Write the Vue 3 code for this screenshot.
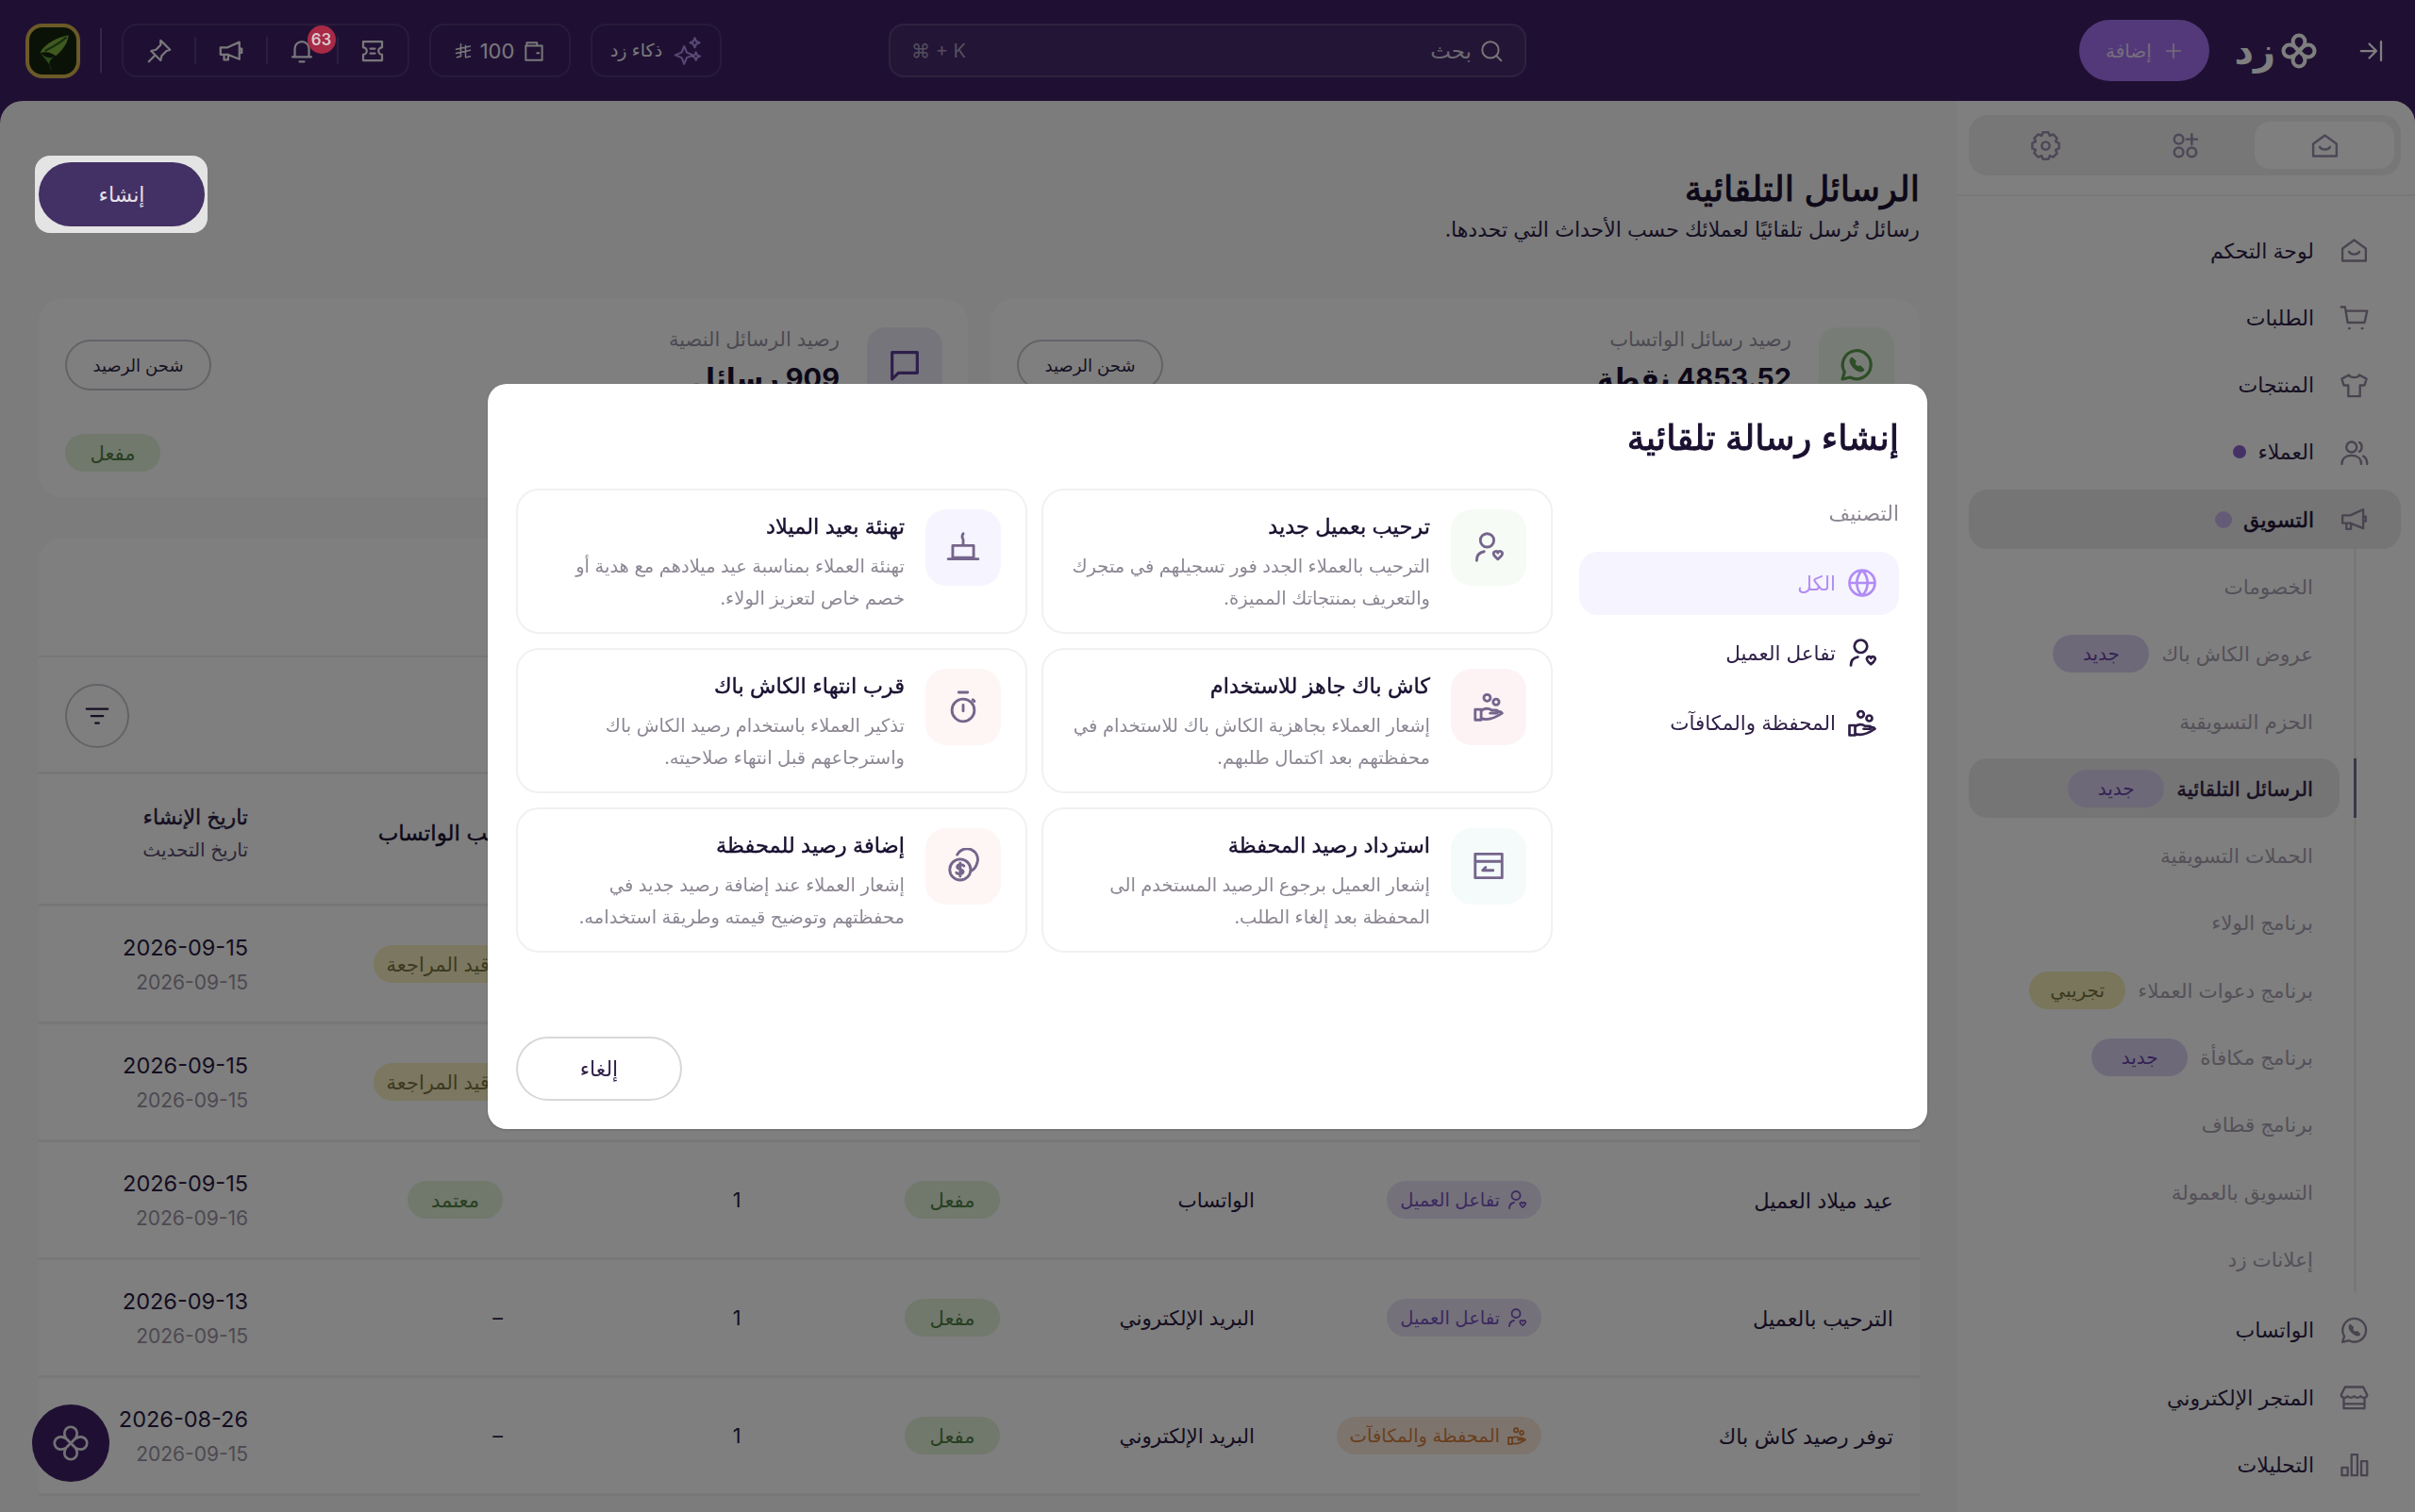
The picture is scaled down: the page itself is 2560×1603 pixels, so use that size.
<template>
  <div class="app" dir="rtl">
    <header class="topbar">
      <div class="top-right">
        <svg class="ic collapse" viewBox="0 0 24 24"><path :d="icons.collapse" /></svg>
        <div class="brand">
          <svg class="ic flower" viewBox="0 0 24 24"><path :d="icons.flower" /></svg>
          <span>زد</span>
        </div>
        <button class="add-btn">
          <svg class="ic" viewBox="0 0 24 24"><path :d="icons.plus" /></svg>
          <span>إضافة</span>
        </button>
      </div>

      <div class="search">
        <svg class="ic" viewBox="0 0 24 24"><path :d="icons.search" /></svg>
        <span>بحث</span>
        <span class="kbd" dir="ltr">⌘ + K</span>
      </div>

      <div class="top-left">
        <div class="top-box ai-box">
          <svg class="ic spark" viewBox="0 0 24 24"><path :d="icons.sparkle" /></svg>
          <span>ذكاء زد</span>
        </div>
        <div class="top-box wallet-box">
          <svg class="ic" viewBox="0 0 24 24"><path :d="icons.wallet" /></svg>
          <span class="num">100</span>
          <svg class="ic riyal" viewBox="0 0 24 24"><path :d="icons.riyal" /></svg>
        </div>
        <div class="top-box icon-box">
          <span v-for="name in ['ticket', 'bell', 'mega', 'pin']" :key="name" class="icon-cell">
            <svg class="ic" viewBox="0 0 24 24"><path :d="icons[name]" /></svg>
            <span v-if="name === 'bell'" class="notif">63</span>
          </span>
        </div>
        <span class="top-sep"></span>
        <div class="logo">
          <svg viewBox="0 0 40 44">
            <path d="M36 6C26 8 12 14 7 24c7-2 12 0 16 3 6-5 12-12 13-21Z" fill="#7fb23f" />
            <path d="M7 24c7 6 11 6 16 3-6 3-9 8-4 15-2-7-7-12-12-18Z" fill="#5c9a32" />
            <path d="M12 22c8-4 15-8 22-14" stroke="#2e5a1c" stroke-width="2" fill="none" />
          </svg>
        </div>
      </div>
    </header>

    <div class="shell">
      <aside class="sidebar">
        <div class="tabs-wrap">
          <div class="tabs">
            <span class="tab active"><svg class="ic" viewBox="0 0 24 24"><path :d="icons.home" /></svg></span>
            <span class="tab"><svg class="ic" viewBox="0 0 24 24"><path :d="icons.apps" /></svg></span>
            <span class="tab"><svg class="ic" viewBox="0 0 24 24"><path :d="icons.gear" /></svg></span>
          </div>
        </div>
        <nav class="nav">
          <a v-for="item in navTop" :key="item.label" class="nav-item" :class="{ active: item.active }">
            <svg class="ic" viewBox="0 0 24 24"><path :d="icons[item.icon]" /></svg>
            <span>{{ item.label }}</span>
            <i v-if="item.dot" class="dot" :class="{ light: item.active }"></i>
          </a>
          <div class="sub-list">
            <a v-for="sub in navSub" :key="sub.label" class="sub-item" :class="{ active: sub.active }">
              <span>{{ sub.label }}</span>
              <em v-if="sub.tag" class="tag" :class="sub.tagType">{{ sub.tag }}</em>
            </a>
          </div>
          <a v-for="item in navBottom" :key="item.label" class="nav-item">
            <svg class="ic" viewBox="0 0 24 24"><path :d="icons[item.icon]" /></svg>
            <span>{{ item.label }}</span>
          </a>
        </nav>
      </aside>

      <main class="page">
        <div class="page-head">
          <div>
            <h1>الرسائل التلقائية</h1>
            <p>رسائل تُرسل تلقائيًا لعملائك حسب الأحداث التي تحددها.</p>
          </div>
          <div class="spot">
            <button class="create-btn">إنشاء</button>
          </div>
        </div>

        <div class="stats">
          <section v-for="stat in stats" :key="stat.label" class="stat">
            <div class="stat-top">
              <span class="stat-icon" :class="stat.tone">
                <svg class="ic" viewBox="0 0 24 24"><path :d="icons[stat.icon]" /></svg>
              </span>
              <div class="stat-text">
                <span>{{ stat.label }}</span>
                <b>{{ stat.value }}</b>
              </div>
              <button class="charge">شحن الرصيد</button>
            </div>
            <span class="pill green stat-pill">مفعل</span>
          </section>
        </div>

        <section class="table-card">
          <div class="table-tabs"></div>
          <div class="table-tools">
            <button class="filter"><svg class="ic" viewBox="0 0 24 24"><path :d="icons.filter" /></svg></button>
          </div>
          <div class="row head">
            <span>اسم الرسالة</span>
            <span>التصنيف</span>
            <span>القناة</span>
            <span>الحالة</span>
            <span class="count">الإرسال</span>
            <span class="wa-head">قالب الواتساب</span>
            <span class="dates"><b>تاريخ الإنشاء</b><small>تاريخ التحديث</small></span>
          </div>
          <div v-for="row in rows" :key="row.name" class="row">
            <span class="name">{{ row.name }}</span>
            <span>
              <em class="pill cat" :class="row.catTone">
                <svg class="ic" viewBox="0 0 24 24"><path :d="icons[row.catIcon]" /></svg>
                {{ row.cat }}
              </em>
            </span>
            <span class="channel">{{ row.channel }}</span>
            <span><em class="pill green">مفعل</em></span>
            <span class="count">1</span>
            <span class="wa">
              <em v-if="row.wa" class="pill" :class="row.waTone">{{ row.wa }}</em>
              <template v-else>–</template>
            </span>
            <span class="dates"><b>{{ row.created }}</b><small>{{ row.updated }}</small></span>
          </div>
        </section>

        <button class="fab"><svg class="ic" viewBox="0 0 24 24"><path :d="icons.flower" /></svg></button>
      </main>
    </div>

    <div class="overlay">
      <div class="modal">
        <h2>إنشاء رسالة تلقائية</h2>
        <div class="modal-body">
          <div class="cats">
            <div class="cats-label">التصنيف</div>
            <div v-for="cat in categories" :key="cat.label" class="cat-item" :class="{ active: cat.active }">
              <svg class="ic" viewBox="0 0 24 24"><path :d="icons[cat.icon]" /></svg>
              <span>{{ cat.label }}</span>
            </div>
          </div>
          <div class="templates">
            <article v-for="card in cards" :key="card.title" class="tpl">
              <span class="tpl-icon" :class="card.tone">
                <svg class="ic" viewBox="0 0 24 24"><path :d="icons[card.icon]" /></svg>
              </span>
              <div>
                <h3>{{ card.title }}</h3>
                <p>{{ card.desc }}</p>
              </div>
            </article>
          </div>
        </div>
        <div class="modal-foot">
          <button class="cancel">إلغاء</button>
        </div>
      </div>
    </div>
  </div>
</template>

<script setup>
// cog outline, 8 teeth
const gear = () => {
  const pts = [];
  for (let i = 0; i < 8; i++) {
    const a = (i * Math.PI) / 4;
    [[-0.2, 10.5], [0.2, 10.5], [0.39, 8.3]].forEach(([o, r]) => {
      pts.push((12 + r * Math.cos(a + o)).toFixed(1) + ' ' + (12 + r * Math.sin(a + o)).toFixed(1));
    });
  }
  return 'M' + pts.join('L') + 'ZM12 9a3 3 0 1 0 0 6 3 3 0 0 0 0-6Z';
};

const icons = {
  home: 'M3 10.5 12 4l9 6.5V20H3ZM8 13c1.5 2.6 6.5 2.6 8 0',
  cart: 'M2 4h3l2 12h13l2-9H5.6M8 20.5h.5M18 20.5h.5',
  shirt: 'M8 4 2.5 7 4 12h3.5v8.5h9V12H20l1.5-5L16 4c-1 2.5-7 2.5-8 0Z',
  users: 'M10 4a4 4 0 1 0 0 8 4 4 0 0 0 0-8ZM2.5 21c0-4.5 3.5-6.5 7.5-6.5s7.5 2 7.5 6.5M16 4.5c2.5 1 2.5 6 0 7M19 15c2 1 3 3 3 6',
  mega: 'M3 9h6l10-4.5V19L9 15H3ZM6 15v4.5h3.5V15M19 10h2v3.5h-2',
  whatsapp: 'M3 21l1.4-4.6A9 9 0 1 1 8 19.8ZM9 8c-1 1-.5 3.2 1.6 5.3S15 16 16 15l-1.8-1.8-1.4.6c-1-.5-2.1-1.6-2.6-2.6l.6-1.4Z',
  store: 'M5 4h14l3 6c0 2.5-3.5 3-5 1-1.2 1.6-3.8 1.6-5 0-1.2 1.6-3.8 1.6-5 0-1.5 2-5 1.5-5-1ZM4 13v7.5h16V13M4 17h16',
  chart: 'M2.5 14.5H7v6H2.5ZM10 4.5h4.5v16H10ZM17.5 9.5H22v11h-4.5Z',
  gear: gear(),
  apps: 'M7 3.5a3.5 3.5 0 1 0 0 7 3.5 3.5 0 0 0 0-7ZM7 13.5a3.5 3.5 0 1 0 0 7 3.5 3.5 0 0 0 0-7ZM17 13.5a3.5 3.5 0 1 0 0 7 3.5 3.5 0 0 0 0-7ZM17 3v8M13 7h8',
  pin: 'M13 3l8 8-3 1-4 4-1 4-8-8 4-1 4-4ZM8 16l-5 5',
  bell: 'M6 17v-7a6 6 0 0 1 12 0v7M4 17h16M10 21h4',
  ticket: 'M4 4h16v5a3 3 0 0 0 0 6v5H4v-5a3 3 0 0 0 0-6ZM10 10h4M10 14h4',
  wallet: 'M5 7V4h10v3M4 7h16v14H4ZM15 14h2',
  riyal: 'M9 3v16l-5 1M15 5v15M3 10l18-4M3 15l18-4M16 20l5-1',
  sparkle: 'M9 8l2.2 5.3 5.300 2.200-5.300 2.200L9 23l-2.200-5.300-5.300-2.200 5.300-2.200ZM18 1l1.200 2.800L22 5l-2.800 1.200L18 9l-1.200-2.800L14 5l2.800-1.200ZM19 13l1 2.500 2.500 1-2.500 1-1 2.500-1-2.500-2.500-1 2.500-1Z',
  search: 'M11 3a8 8 0 1 0 0 16 8 8 0 0 0 0-16ZM17 17l4.500 4.500',
  plus: 'M12 4v16M4 12h16',
  collapse: 'M20 4v16M3 12h13M10 6l6 6-6 6',
  flower: 'M12 12c-2.500-2-3.500-3.500-3.500-5.500a3.500 3.500 0 0 1 7 0c0 2-1 3.500-3.500 5.500Zc2-2.500 3.500-3.500 5.500-3.500a3.500 3.500 0 0 1 0 7c-2 0-3.500-1-5.500-3.500Zc2.500 2 3.500 3.500 3.500 5.500a3.500 3.500 0 0 1-7 0c0-2 1-3.500 3.500-5.500Zc-2 2.500-3.500 3.500-5.500 3.500a3.500 3.500 0 0 1 0-7c2 0 3.500 1 5.500 3.500Z',
  filter: 'M3 6h18M7 12h10M10.500 18h3',
  chat: 'M4 4h16v13H8l-4 4Z',
  globe: 'M12 3a9 9 0 1 0 0 18 9 9 0 0 0 0-18ZM3 12h18M12 3c-5 5-5 13 0 18M12 3c5 5 5 13 0 18',
  userheart: 'M11 3a4.500 4.500 0 1 0 0 9 4.500 4.500 0 0 0 0-9ZM4 21c0-3.500 2-5.500 5-6M15.500 15.500c1-1 2.500-1 2.700.4.2-1.400 2-1.400 2.800-.4.8 1.200 0 2.400-2.800 4.600-2.800-2.200-3.500-3.400-2.700-4.600Z',
  handcoins: 'M3 14h4v7H3ZM7 15c2-2 5-2 7-.5h3c1.500 0 1.500 2 0 2h-4M7 20c4 1.500 8 .5 14-3.500-1-1.500-3-1-4.500 0M11 4a2.200 2.200 0 1 0 0 4.400A2.200 2.200 0 0 0 11 4ZM17 7a2 2 0 1 0 0 4 2 2 0 0 0 0-4Z',
  cake: 'M12 3c-.6 1-.9 2-.4 3M12 7v4M5 11h14v8H5ZM2 20h20',
  timer: 'M12 7a7.500 7.500 0 1 0 0 15 7.500 7.500 0 0 0 0-15ZM9 2.500h6M12 11v4M18.500 7.500l1 1',
  refund: 'M3 4h18v16H3ZM3 9h18M8 15h7M8 15l2-2',
  coins: 'M10 7.500a7 7 0 1 0 0 14 7 7 0 0 0 0-14ZM12.500 12c-.5-1-4-1.500-4.500.5s4.500 1.500 4 3.500-4 1.500-4.500.5M10 10v9M8 4.500a7 7 0 0 1 13 6.500 7 7 0 0 1-3 4',
};

const navTop = [
  { label: 'لوحة التحكم', icon: 'home' },
  { label: 'الطلبات', icon: 'cart' },
  { label: 'المنتجات', icon: 'shirt' },
  { label: 'العملاء', icon: 'users', dot: true },
  { label: 'التسويق', icon: 'mega', dot: true, active: true },
];
const navSub = [
  { label: 'الخصومات' },
  { label: 'عروض الكاش باك', tag: 'جديد', tagType: 'new' },
  { label: 'الحزم التسويقية' },
  { label: 'الرسائل التلقائية', tag: 'جديد', tagType: 'new', active: true },
  { label: 'الحملات التسويقية' },
  { label: 'برنامج الولاء' },
  { label: 'برنامج دعوات العملاء', tag: 'تجريبي', tagType: 'beta' },
  { label: 'برنامج مكافأة', tag: 'جديد', tagType: 'new' },
  { label: 'برنامج قطاف' },
  { label: 'التسويق بالعمولة' },
  { label: 'إعلانات زد' },
];
const navBottom = [
  { label: 'الواتساب', icon: 'whatsapp' },
  { label: 'المتجر الإلكتروني', icon: 'store' },
  { label: 'التحليلات', icon: 'chart' },
];

const stats = [
  { label: 'رصيد رسائل الواتساب', value: '4853.52 نقطة', icon: 'whatsapp', tone: 'wa-tone' },
  { label: 'رصيد الرسائل النصية', value: '909 رسائل', icon: 'chat', tone: 'sms-tone' },
];

const rows = [
  { name: 'قرب انتهاء الكاش باك', cat: 'المحفظة والمكافآت', catIcon: 'handcoins', catTone: 'orange', channel: 'الواتساب', wa: 'قيد المراجعة', waTone: 'yellow', created: '2026-09-15', updated: '2026-09-15' },
  { name: 'إضافة رصيد للمحفظة', cat: 'المحفظة والمكافآت', catIcon: 'handcoins', catTone: 'orange', channel: 'الواتساب', wa: 'قيد المراجعة', waTone: 'yellow', created: '2026-09-15', updated: '2026-09-15' },
  { name: 'عيد ميلاد العميل', cat: 'تفاعل العميل', catIcon: 'userheart', catTone: 'purple', channel: 'الواتساب', wa: 'معتمد', waTone: 'green', created: '2026-09-15', updated: '2026-09-16' },
  { name: 'الترحيب بالعميل', cat: 'تفاعل العميل', catIcon: 'userheart', catTone: 'purple', channel: 'البريد الإلكتروني', created: '2026-09-13', updated: '2026-09-15' },
  { name: 'توفر رصيد كاش باك', cat: 'المحفظة والمكافآت', catIcon: 'handcoins', catTone: 'orange', channel: 'البريد الإلكتروني', created: '2026-08-26', updated: '2026-09-15' },
];

const categories = [
  { label: 'الكل', icon: 'globe', active: true },
  { label: 'تفاعل العميل', icon: 'userheart' },
  { label: 'المحفظة والمكافآت', icon: 'handcoins' },
];

const cards = [
  { title: 'ترحيب بعميل جديد', desc: 'الترحيب بالعملاء الجدد فور تسجيلهم في متجرك والتعريف بمنتجاتك المميزة.', icon: 'userheart', tone: 'g' },
  { title: 'تهنئة بعيد الميلاد', desc: 'تهنئة العملاء بمناسبة عيد ميلادهم مع هدية أو خصم خاص لتعزيز الولاء.', icon: 'cake', tone: 'v' },
  { title: 'كاش باك جاهز للاستخدام', desc: 'إشعار العملاء بجاهزية الكاش باك للاستخدام في محفظتهم بعد اكتمال طلبهم.', icon: 'handcoins', tone: 'r' },
  { title: 'قرب انتهاء الكاش باك', desc: 'تذكير العملاء باستخدام رصيد الكاش باك واسترجاعهم قبل انتهاء صلاحيته.', icon: 'timer', tone: 'o' },
  { title: 'استرداد رصيد المحفظة', desc: 'إشعار العميل برجوع الرصيد المستخدم الى المحفظة بعد إلغاء الطلب.', icon: 'refund', tone: 'm' },
  { title: 'إضافة رصيد للمحفظة', desc: 'إشعار العملاء عند إضافة رصيد جديد في محفظتهم وتوضيح قيمته وطريقة استخدامه.', icon: 'coins', tone: 'o' },
];
</script>

<style>
html, body { margin: 0; overflow: hidden; }
</style>

<style scoped>
* { box-sizing: border-box; }
.app {
  width: 2560px;
  height: 1603px;
  overflow: hidden;
  background: #3e2066;
  color: #2f1f47;
  font-family: Inter, "DejaVu Sans", sans-serif;
  font-size: 21px;
  display: flex;
  flex-direction: column;
}
button { font: inherit; color: inherit; background: none; border: 0; padding: 0; }
h1, h2, h3, p { margin: 0; font: inherit; }
em { font-style: normal; }
.ic { width: 30px; height: 30px; flex: none; fill: none; stroke: currentColor; stroke-width: 1.8; stroke-linecap: round; stroke-linejoin: round; }

/* top bar */
.topbar {
  height: 107px;
  flex: none;
  display: grid;
  grid-template-columns: 1fr 676px 1fr;
  align-items: center;
  color: #fff;
}
.top-right { display: flex; align-items: center; padding-right: 31px; }
.collapse { width: 30px; height: 30px; margin-left: 40px; color: #fff; }
.brand { display: flex; align-items: center; gap: 3px; margin-left: 26px; font-size: 40px; font-weight: 700; }
.flower { width: 44px; height: 44px; stroke-width: 2.2; }
.add-btn {
  width: 138px;
  height: 65px;
  border-radius: 33px;
  background: #a672f4;
  color: #e8dcf8;
  display: flex;
  align-items: center;
  justify-content: center;
  gap: 12px;
  font-size: 20px;
}
.add-btn .ic { width: 22px; height: 22px; }
.search {
  height: 57px;
  border: 2px solid rgba(255, 255, 255, .12);
  border-radius: 16px;
  background: rgba(255, 255, 255, .05);
  display: flex;
  align-items: center;
  gap: 8px;
  padding: 0 22px 0 22px;
  color: #d8d0e2;
  font-size: 23px;
}
.search .ic { width: 26px; height: 26px; color: #f0ecf4; }
.kbd { margin-right: auto; color: #a89cbc; font-size: 20px; }
.top-left { display: flex; align-items: center; justify-content: flex-end; gap: 21px; padding-left: 27px; color: #f2f0f6; }
.top-box {
  height: 57px;
  border: 2px solid rgba(255, 255, 255, .1);
  border-radius: 16px;
  display: flex;
  align-items: center;
}
.ai-box { width: 139px; gap: 12px; justify-content: center; font-size: 19px; }
.spark { color: #b291ec; stroke-width: 1.6; }
.wallet-box { width: 150px; justify-content: center; gap: 8px; font-size: 22px; }
.wallet-box .ic { width: 26px; height: 26px; }
.riyal { width: 20px !important; }
.icon-box { width: 305px; }
.icon-cell {
  position: relative;
  width: 76px;
  height: 29px;
  display: flex;
  align-items: center;
  justify-content: center;
  border-left: 2px solid rgba(255, 255, 255, .14);
}
.icon-cell:last-child { border-left: 0; }
.notif {
  position: absolute;
  z-index: 25;
  top: -12px;
  left: 42px;
  width: 30px;
  height: 30px;
  border-radius: 50%;
  background: #a82a45;
  color: #d8c8cc;
  font-size: 17px;
  font-weight: 600;
  display: flex;
  align-items: center;
  justify-content: center;
}
.top-sep { width: 2px; height: 47px; background: rgba(255, 255, 255, .22); }
.logo {
  width: 58px;
  height: 58px;
  border: 4px solid #d6b44e;
  border-radius: 18px;
  background: #14240e;
  display: flex;
  align-items: center;
  justify-content: center;
}
.logo svg { width: 44px; height: 46px; }

/* shell */
.shell {
  flex: 1;
  min-height: 0;
  display: flex;
  background: #f8f8f8;
  border-radius: 24px 24px 0 0;
  overflow: hidden;
}
.sidebar { width: 485px; flex: none; background: #fff; }
.tabs-wrap { height: 101px; padding: 15px 15px 0 12px; border-bottom: 2px solid #f0f0f0; }
.tabs {
  height: 64px;
  background: #eeeeee;
  border-radius: 20px;
  display: grid;
  grid-template-columns: repeat(3, 1fr);
  padding: 7px;
  color: #9a8fae;
}
.tabs .ic { width: 33px; height: 33px; }
.tab { display: flex; align-items: center; justify-content: center; border-radius: 16px; }
.tab.active { background: #fff; }
.nav { padding: 26px 15px 0 12px; display: flex; flex-direction: column; gap: 8.3px; }
.nav-item {
  height: 63px;
  display: flex;
  align-items: center;
  padding-right: 33px;
  gap: 26px;
  border-radius: 20px;
  color: #2f1f47;
  font-size: 22px;
}
.nav-item .ic { width: 33px; height: 33px; stroke-width: 1.7; color: #93889f; }
.nav-item.active { background: #eaeaea; color: #1f1033; -webkit-text-stroke: .5px currentColor; }
.dot { width: 14px; height: 14px; border-radius: 50%; background: #8a62d0; margin-right: -14px; }
.dot.light { width: 18px; height: 18px; background: #cdb6ef; }
.sub-list {
  margin-right: 47px;
  padding: 8px 15px 4px 0;
  margin-top: -8px;
  border-right: 3px solid #eeeeee;
  display: flex;
  flex-direction: column;
  gap: 8.3px;
}
.sub-item {
  position: relative;
  height: 63px;
  display: flex;
  align-items: center;
  gap: 13px;
  padding-right: 28px;
  border-radius: 20px;
  color: #aaa3b2;
  font-size: 21.5px;
}
.sub-item.active { background: #eaeaea; color: #2f1f47; }
.sub-item.active > span { -webkit-text-stroke: .5px currentColor; }
.sub-item.active::after {
  content: '';
  position: absolute;
  top: 0;
  bottom: 0;
  right: -18px;
  width: 3px;
  background: #7a6a96;
}
.tag { width: 102px; height: 40px; border-radius: 20px; display: flex; align-items: center; justify-content: center; font-size: 20px; font-weight: 400; }
.tag.new { background: #dcd3f2; color: #6a45a8; }
.tag.beta { background: #f3ecb8; color: #7a7440; }

/* page */
.page { flex: 1; min-width: 0; padding: 58px 40px 0 41px; position: relative; }
.page-head { height: 152px; display: flex; justify-content: space-between; align-items: flex-start; }
h1 { font-size: 37px; font-weight: 400; -webkit-text-stroke: 1px currentColor; color: #1a1030; line-height: 52px; margin-top: 9px; }
.page-head p { font-size: 22px; line-height: 34px; color: #2f1f47; }
.spot {
  position: relative;
  z-index: 30;
  margin-left: -4px;
  background: #e4e4e4;
  border-radius: 16px;
  padding: 7px 3px 7px 4px;
}
.create-btn { display: block; width: 176px; height: 68px; border-radius: 34px; background: #433064; color: #e4e0ea; font-size: 22px; }

.stats { display: grid; grid-template-columns: 1fr 1fr; gap: 24px; }
.stat { height: 210px; background: #fff; border-radius: 24px; padding: 30px 27px 27px 28px; display: flex; flex-direction: column; }
.stat-top { display: flex; gap: 29px; align-items: flex-start; }
.stat-icon { width: 80px; height: 80px; border-radius: 20px; display: flex; align-items: center; justify-content: center; }
.stat-icon .ic { width: 40px; height: 40px; stroke-width: 1.9; }
.wa-tone { background: #f0f8ef; color: #5a9c4c; }
.sms-tone { background: #eeeaf8; color: #5a3d96; }
.stat-text { display: flex; flex-direction: column; gap: 11px; color: #9a93a4; font-size: 21px; }
.stat-text b { font-size: 29px; color: #1a1030; }
.charge { margin-right: auto; margin-top: 13px; width: 155px; height: 54px; border: 2px solid #c9c5ce; border-radius: 27px; font-size: 18px; color: #2f1f47; }
.pill { height: 40px; min-width: 101px; padding: 0 14px; border-radius: 20px; display: inline-flex; align-items: center; justify-content: center; gap: 6px; font-size: 21px; }
.pill.cat { font-size: 19.5px; }
.pill .ic { width: 24px; height: 24px; }
.stat-pill { align-self: flex-end; margin-top: auto; }
.green { background: #e3f1d8; color: #4d8044; }
.yellow { background: #f6efc0; color: #7a7440; }
.purple { background: #e8e2f6; color: #7a54c0; }
.orange { background: #fbe9dc; color: #d4803c; }

.table-card { margin-top: 44px; background: #fff; border-radius: 24px 24px 0 0; }
.table-tabs { height: 126px; border-bottom: 2px solid #eee; }
.table-tools { height: 124px; padding: 28px 28px 0; border-bottom: 3px solid #eee; display: flex; justify-content: flex-end; }
.filter { width: 68px; height: 68px; border: 2px solid #c9c5ce; border-radius: 50%; display: flex; align-items: center; justify-content: center; }
.row {
  height: 125px;
  display: grid;
  grid-template-columns: 373px 304px 270px 180px 198px 419px 1fr;
  align-items: center;
  padding-right: 28px;
  border-bottom: 3px solid #eee;
  font-size: 21.5px;
}
.row.head { height: 140px; padding-bottom: 13px; color: #1a1030; }
.row.head > span { -webkit-text-stroke: .4px currentColor; }
.head .wa-head { white-space: nowrap; margin-right: 140px; font-size: 23px; }
.name { color: #2a1a42; font-size: 22.5px; }
.channel { color: #2a1a42; }
.count { text-align: center; color: #2a1a42; }
.wa { padding-right: 149px; white-space: nowrap; }
.dates { display: flex; flex-direction: column; gap: 10px; white-space: nowrap; }
.dates b { font-weight: 400; font-size: 23.5px; color: #2a1a42; }
.head .dates b { font-size: 22px; }
.dates small { font-size: 21px; color: #9a93a4; }
.head .dates small { color: #5a4d6e; font-size: 20px; -webkit-text-stroke: 0; }
.fab {
  position: absolute;
  left: 34px;
  top: 1382px;
  width: 82px;
  height: 82px;
  border-radius: 50%;
  background: #3e2066;
  color: #e8e4ee;
  display: flex;
  align-items: center;
  justify-content: center;
}
.fab .ic { width: 46px; height: 46px; stroke-width: 1.4; }

/* modal */
.overlay {
  position: fixed;
  inset: 0;
  z-index: 20;
  background: rgba(0, 0, 0, .5);
  display: flex;
  align-items: center;
  justify-content: center;
}
.modal {
  width: 1526px;
  height: 790px;
  background: #fff;
  border-radius: 20px;
  padding: 30px;
  box-shadow: 0 1px 3px rgba(0, 0, 0, .2);
  display: flex;
  flex-direction: column;
}
.modal h2 { font-size: 37px; font-weight: 400; -webkit-text-stroke: 1px currentColor; color: #1a1030; line-height: 54px; }
.modal-body { display: flex; gap: 28px; margin-top: 27px; }
.cats { width: 339px; flex: none; }
.cats-label { color: #8d8794; font-size: 22px; line-height: 40px; margin: 6px 0 21px; }
.cat-item { height: 67px; margin-bottom: 7px; padding-right: 21px; display: flex; align-items: center; gap: 10px; border-radius: 20px; font-size: 21.5px; color: #2f1f47; }
.cat-item .ic { width: 36px; height: 36px; }
.cat-item.active { background: #f6f4fe; color: #b18cf5; }
.templates { flex: 1; display: grid; grid-template-columns: 1fr 1fr; gap: 15px; align-content: start; }
.tpl { height: 154px; border: 2px solid #f1f1f1; border-radius: 24px; padding: 20px 26px 0 20px; display: flex; gap: 22px; }
.tpl-icon { width: 80px; height: 81px; flex: none; border-radius: 22px; display: flex; align-items: center; justify-content: center; color: #75658c; }
.tpl-icon .ic { width: 38px; height: 38px; }
.g { background: #f6fbf5; }
.v { background: #f6f4fe; }
.r { background: #fdf3f5; }
.o { background: #fdf6f4; }
.m { background: #f5fbfb; }
.tpl h3 { font-size: 22.5px; -webkit-text-stroke: .4px currentColor; line-height: 36px; color: #1a1030; }
.tpl p { max-width: 385px; font-size: 19.5px; line-height: 34px; color: #8d8794; margin-top: 7px; }
.modal-foot { margin-top: auto; display: flex; justify-content: flex-end; }
.cancel { display: block; width: 176px; height: 68px; border: 2px solid #d8d8d8; border-radius: 34px; font-size: 22px; color: #2f1f47; }
</style>
